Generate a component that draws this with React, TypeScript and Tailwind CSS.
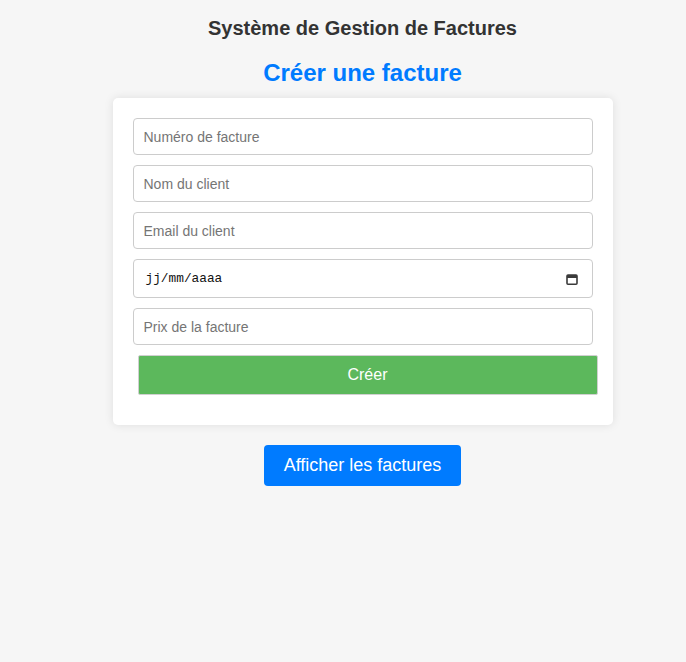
import React from 'react';

const fieldClass =
  'block w-[460px] h-[37px] mb-[10px] px-[10px] border border-[#cccccc] rounded-[4px] bg-white text-[14px] text-[#333] placeholder:text-[#757575] outline-none';

const CalendarIcon = () => (
  <svg width="12" height="12" viewBox="0 0 12 12" fill="none">
    <rect x="1" y="2" width="10" height="9.2" rx="1" stroke="#3a3a3a" strokeWidth="1.6" />
    <rect x="1" y="2" width="10" height="3" fill="#3a3a3a" />
  </svg>
);

export default function App() {
  return (
    <div
      className="min-h-screen bg-[#f6f6f6] pl-[39px] pt-[16px] pb-10"
      style={{ fontFamily: '"Liberation Sans", Arial, sans-serif' }}
    >
      <div className="flex flex-col items-center">
        <h1 className="text-[20px] leading-[24px] font-bold text-[#333333]">Système de Gestion de Factures</h1>
        <h2 className="mt-[19px] text-[24px] leading-[28px] font-bold text-[#007bff]">Créer une facture</h2>

        <form
          className="mt-[11px] w-[500px] bg-white rounded-[5px] shadow-[0_0_10px_rgba(0,0,0,0.1)] px-5 pt-5 pb-5"
          onSubmit={(e) => e.preventDefault()}
        >
          <input type="text" placeholder="Numéro de facture" className={fieldClass} />
          <input type="text" placeholder="Nom du client" className={fieldClass} />
          <input type="email" placeholder="Email du client" className={fieldClass} />

          {/* date field drawn by hand so the French placeholder shows */}
          <div className="flex items-center justify-between w-[460px] h-[39px] mb-[10px] pl-[12px] pr-[14px] border border-[#cccccc] rounded-[4px] bg-white">
            <span
              className="text-[12.8px] text-[#111]"
              style={{ fontFamily: '"Liberation Mono", "DejaVu Sans Mono", monospace' }}
            >
              jj/mm/aaaa
            </span>
            <CalendarIcon />
          </div>

          <input type="number" placeholder="Prix de la facture" className={fieldClass} />

          <button
            type="submit"
            className="block ml-[5px] w-[460px] h-[40px] mb-[10px] bg-[#5cb85c] border border-[#d0d0d0] rounded-[2px] text-white text-[16px]"
          >
            Créer
          </button>
        </form>

        <button
          type="button"
          className="mt-[20px] h-[41px] px-[20px] bg-[#007bff] rounded-[4px] text-white text-[18px]"
        >
          Afficher les factures
        </button>
      </div>
    </div>
  );
}
